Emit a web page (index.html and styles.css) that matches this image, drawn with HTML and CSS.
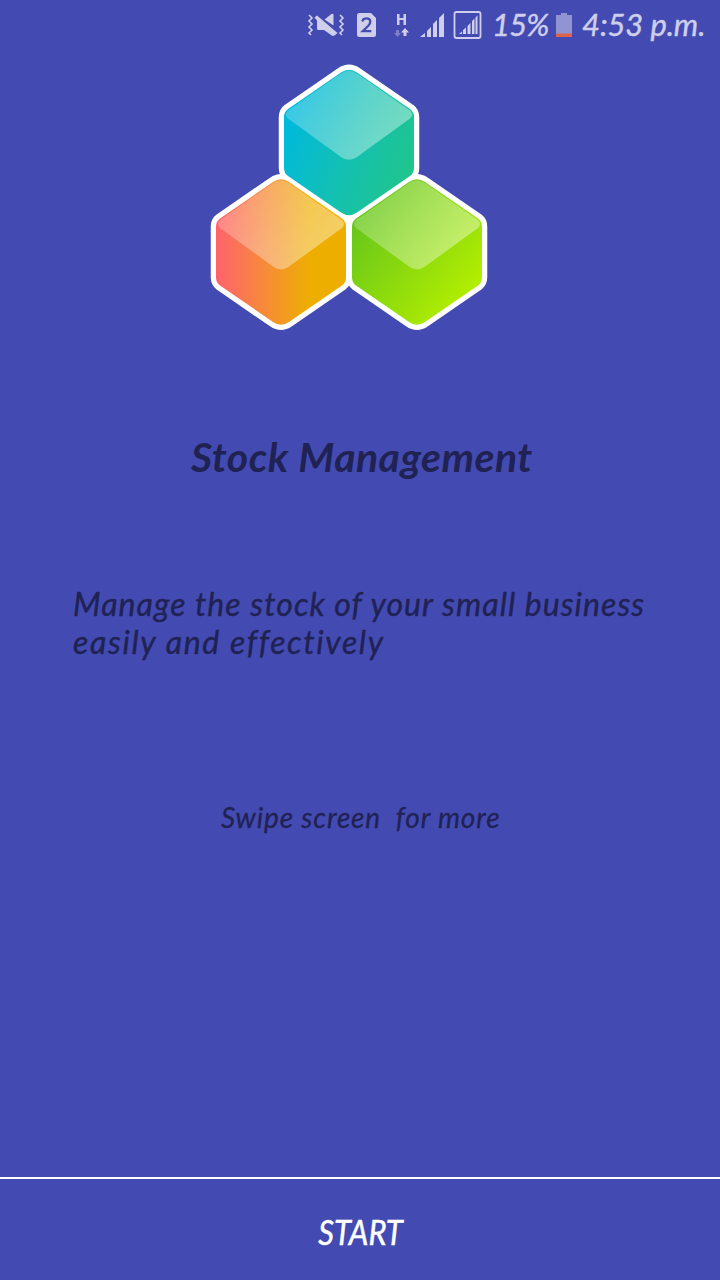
FILE: index.html
```html
<!DOCTYPE html>
<html lang="en">
<head>
<meta charset="utf-8">
<title>Stock Management</title>
<link rel="stylesheet" href="styles.css">
</head>
<body>
<div class="screen">
  <header class="status">
    <svg class="status-icons" viewBox="300 0 184 50" aria-hidden="true">
      <g fill="#cfcfec">
        <path d="M314.500 17.500L317 15.500L337.500 33L334.500 35.500L332.500 36L324 30H318.500Q317 30 317 28.500V20.500z"/>
        <path d="M324.500 19.500L331.500 14Q333.500 13 333.500 15V25.500z"/>
        <path d="M309 15l3 3-3 3 3 3-3 3 3 3-3 3 2 2M340 15l3 3-3 3 3 3-3 3 3 3-3 3 2 2" fill="none" stroke="#cfcfec" stroke-width="1.600"/>
        <path d="M359.500 13H371l5 5v16.500a2.500 2.500 0 0 1-2.500 2.500h-14a2.500 2.500 0 0 1-2.500-2.500v-19a2.500 2.500 0 0 1 2.500-2.500z"/>
        <path d="M362.300 21.500q.6-3.200 4.200-3.200t3.800 3.200q0 2-2 4.300l-5.500 5.400h8.500" fill="none" stroke="#434bb2" stroke-width="2.300"/>
        <path d="M397 14h2.500v4h4v-4h2.500v11h-2.500v-5h-4v5H397z"/>
        <path d="M405 28l4 4.500h-2.500V36h-3v-3.500H401z"/>
        <path d="M396 30h3v3h2l-3.500 4-3.500-4h2z" opacity=".4"/>
        <path d="M420 37l5-4v4zM427 31l4-4v10h-4zM433 24l4-4v17h-4zM439 18l5-5v24h-5z"/>
        <path d="M459 34l3-2.500V34zM463 30l3-2.500V34h-3zM467.500 26l3-3v11h-3zM472 21l2.500-2.500V34H472zM475.500 17.500l2-2V34h-2z"/>
      </g>
      <rect x="454.500" y="12" width="26" height="26" rx="2" fill="none" stroke="#cfcfec" stroke-width="1.800"/>
    </svg>
    <span class="percent">15%</span>
    <svg class="battery" viewBox="0 0 16 24" aria-hidden="true">
      <path d="M0 2h5V0h6v2h5v19H0z" fill="#9094d1"/>
      <path d="M0 20.500h16V24H0z" fill="#dd634d"/>
    </svg>
    <span class="clock">4:53 p.m.</span>
  </header>
  <main class="slide">
    <svg class="logo" viewBox="200 55 300 285" aria-hidden="true">
      <defs>
        <linearGradient id="teal" x1="0" y1=".3" x2="1" y2=".75"><stop offset=".05" stop-color="#00b9dc"/><stop offset=".5" stop-color="#13c0b4"/><stop offset="1" stop-color="#20c588"/></linearGradient>
        <linearGradient id="orange"><stop offset="0" stop-color="#fe626c"/><stop offset=".4" stop-color="#f68d35"/><stop offset=".72" stop-color="#eeae00"/></linearGradient>
        <linearGradient id="green" x1=".1" y1=".15" x2=".9" y2=".85"><stop offset="0" stop-color="#64c51b"/><stop offset="1" stop-color="#b5ef00"/></linearGradient>
        <linearGradient id="shine" x1="0" y1=".2" x2="1" y2=".8"><stop offset="0" stop-color="#fff" stop-opacity=".2"/><stop offset="1" stop-color="#fff" stop-opacity=".42"/></linearGradient>
        <path id="hex" d="M-8 5.500Q0 0 8 5.500L61 42Q65 45 65 50V101Q65 106 61 109L8 145.500Q0 151-8 145.500L-61 109Q-65 106-65 101V50Q-65 45-61 42Z"/>
        <path id="face" d="M-8 6.500Q0 1 8 6.500L61 43.500Q65 47.500 61 51.500L8 90Q0 95.500-8 90L-61 51.500Q-65 47.500-61 43.500Z"/>
      </defs>
      <g fill="#fff" stroke="#fff" stroke-width="10.500" stroke-linejoin="round">
        <use href="#hex" x="349" y="67"/><use href="#hex" x="281" y="176.500"/><use href="#hex" x="417" y="176.500"/>
      </g>
      <use href="#hex" x="349" y="67" fill="url(#teal)"/>
      <use href="#hex" x="281" y="176.500" fill="url(#orange)"/>
      <use href="#hex" x="417" y="176.500" fill="url(#green)"/>
      <g fill="url(#shine)">
        <use href="#face" x="349" y="67"/><use href="#face" x="281" y="176.500"/><use href="#face" x="417" y="176.500"/>
      </g>
    </svg>
    <h1 class="title">Stock Management</h1>
    <p class="lead"><span class="lead-first">Manage the stock of your small business</span><br><span class="lead-second">easily and effectively</span></p>
    <p class="hint">Swipe screen&nbsp; for more</p>
  </main>
  <footer class="footer"><span class="start">START</span></footer>
</div>
</body>
</html>
```
FILE: styles.css
```css
* { box-sizing: border-box; }
body { margin: 0; background: #434bb2; font-family: Lato, "Open Sans", sans-serif; font-style: italic; color: #1f2252; }
.screen { width: 720px; height: 1280px; display: flex; flex-direction: column; overflow: hidden; white-space: nowrap; }
.status { height: 50px; display: flex; align-items: center; padding-left: 300px; color: #cfcfec; font-size: 31px; line-height: 48px; -webkit-text-stroke: 0.4px currentColor; }
.status-icons { width: 184px; height: 50px; flex: none; }
.percent { width: 64px; margin-left: 8px; letter-spacing: -0.8px; }
.battery { width: 16px; height: 24px; flex: none; }
.clock { margin-left: 10px; letter-spacing: -0.1px; }
.percent, .clock { padding-bottom: 2px; }
.slide { flex: 1; display: flex; flex-direction: column; }
.logo { width: 300px; height: 285px; margin: 5px 0 0 200px; }
.title { margin: 92px 0 0 191px; font-size: 41px; line-height: 50px; font-weight: 700; letter-spacing: 0.47px; }
.lead { margin: 103px 0 0 73px; font-size: 32px; line-height: 38px; -webkit-text-stroke: 0.4px currentColor; }
.lead-first { letter-spacing: 1.07px; }
.lead-second { letter-spacing: 1.65px; }
.hint { margin: 137px 0 0 221px; font-size: 28px; line-height: 38px; letter-spacing: 0.86px; -webkit-text-stroke: 0.3px currentColor; }
.footer { height: 103px; border-top: 2px solid #fff; display: flex; align-items: center; justify-content: center; color: #fff; padding-top: 4px; }
.start { font-size: 34px; line-height: 40px; transform: scaleX(0.91); -webkit-text-stroke: 0.5px currentColor; }
```
